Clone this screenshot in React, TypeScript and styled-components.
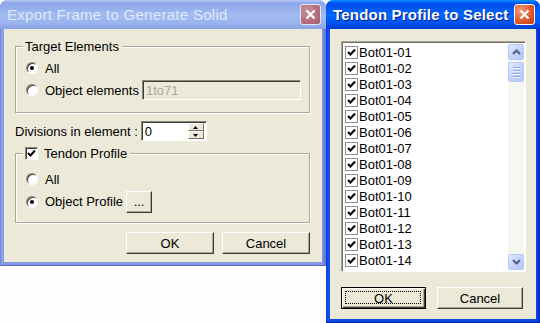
import styled, { createGlobalStyle } from 'styled-components';

const GlobalStyle = createGlobalStyle`
  html, body {
    margin: 0;
    padding: 0;
    background: #ffffff;
    font-family: "Liberation Sans", Arial, sans-serif;
    font-size: 12px;
    color: #000;
  }
`;

const Desktop = styled.div`
  width: 540px;
  height: 323px;
  display: flex;
  align-items: flex-start;
  overflow: hidden;
  background: #fefefe;
`;

const Window = styled.div<{ $active?: boolean; $w: number; $h: number }>`
  width: ${(p) => p.$w}px;
  height: ${(p) => p.$h}px;
  flex: none;
  box-sizing: border-box;
  display: flex;
  flex-direction: column;
  border-radius: 8px 8px 0 0;
  padding-bottom: 4px;
  background: ${(p) =>
    p.$active
      ? 'linear-gradient(to right, #0831d9 0, #1453f0 2px, #0a4be8 4px, #0a4be8 calc(100% - 4px), #0026c4 100%)'
      : 'linear-gradient(to right, #6f84db 0, #8ea4ea 2px, #8298e4 4px, #8298e4 calc(100% - 4px), #5f72cf 100%)'};
  box-shadow: ${(p) =>
    p.$active ? 'inset 0 -1px 0 #001ea0' : 'inset 0 -1px 0 #5a68c4'};
`;

const TitleBar = styled.div<{ $active?: boolean }>`
  height: 29px;
  flex: none;
  display: flex;
  align-items: center;
  justify-content: space-between;
  padding: 0 5px 0 7px;
  border-radius: 7px 7px 0 0;
  background: ${(p) =>
    p.$active
      ? 'linear-gradient(to bottom, #0997ff 0, #0053ee 3px, #0050ee 6px, #0066ff 14px, #0058f5 22px, #0041dc 27px, #003dd7 29px)'
      : 'linear-gradient(to bottom, #b8caf5 0, #8da6ea 3px, #94aeec 8px, #a4bcf1 15px, #9bb3ee 23px, #8aa1e4 29px)'};
`;

const TitleText = styled.span<{ $active?: boolean }>`
  font-weight: ${(p) => (p.$active ? 'bold' : 'normal')};
  font-size: 15px;
  letter-spacing: ${(p) => (p.$active ? '0.2px' : '0.3px')};
  color: ${(p) => (p.$active ? '#ffffff' : '#dfe8fa')};
  text-shadow: ${(p) => (p.$active ? '1px 1px 0 #0a1883' : 'none')};
  white-space: nowrap;
`;

const CloseButton = styled.div<{ $active?: boolean }>`
  width: 21px;
  height: 21px;
  box-sizing: border-box;
  border-radius: 3px;
  border: 1px solid ${(p) => (p.$active ? '#ffffff' : '#dfe6f8')};
  background: ${(p) =>
    p.$active
      ? 'radial-gradient(circle at 30% 30%, #f19b7b 0, #e25a2f 55%, #c23b12 100%)'
      : 'radial-gradient(circle at 30% 30%, #c7909c 0, #b26d7b 60%, #a05f70 100%)'};
  display: flex;
  align-items: center;
  justify-content: center;
`;

const Client = styled.div`
  flex: 1;
  margin: 0 4px;
  background: #ece9d8;
  display: flex;
  flex-direction: column;
`;

/* left dialog */

const LeftBody = styled(Client)`
  padding: 10px 12px 0 11px;
`;

const Group = styled.fieldset<{ $h: number; $top: number }>`
  margin: 0;
  height: ${(p) => p.$h}px;
  box-sizing: border-box;
  padding: ${(p) => p.$top}px 6px 0 7px;
  border: 1px solid #aca899;
  box-shadow: inset 1px 1px 0 #ffffff, 1px 1px 0 #ffffff;
`;

const Legend = styled.legend`
  padding: 0 3px 0 2px;
  height: 15px;
  line-height: 15px;
  font-size: 13px;
  background: #ece9d8;
  display: flex;
  align-items: center;
  gap: 6px;
`;

const OptionRow = styled.div<{ $h?: number }>`
  height: ${(p) => p.$h ?? 22}px;
  display: flex;
  align-items: center;
  gap: 3px;
  padding-left: 3px;
  font-size: 13px;
  white-space: nowrap;
`;

const Radio = styled.span<{ $on?: boolean }>`
  width: 12px;
  height: 12px;
  box-sizing: border-box;
  border-radius: 50%;
  border: 1px solid;
  border-color: #8a8878 #ffffff #ffffff #8a8878;
  background: #ffffff;
  box-shadow: inset 1px 1px 0 #3c3b35;
  margin-right: 4px;
  position: relative;
  flex: none;
  &::after {
    content: '';
    display: ${(p) => (p.$on ? 'block' : 'none')};
    position: absolute;
    left: 3px;
    top: 3px;
    width: 4px;
    height: 4px;
    border-radius: 50%;
    background: #000;
  }
`;

const Field = styled.div<{ $w: number; $disabled?: boolean }>`
  width: ${(p) => p.$w}px;
  height: 20px;
  box-sizing: border-box;
  flex-shrink: 1;
  border: 1px solid;
  border-color: #8a8878 #ffffff #ffffff #8a8878;
  box-shadow: inset 1px 1px 0 #3c3b35;
  background: ${(p) => (p.$disabled ? '#ece9d8' : '#ffffff')};
  color: ${(p) => (p.$disabled ? '#aca899' : '#000')};
  display: flex;
  align-items: center;
  padding-left: 3px;
  font-size: 13px;
`;

const DivisionsRow = styled.div`
  height: 22px;
  margin: 7px 0 4px;
  display: flex;
  align-items: center;
  font-size: 13px;
  gap: 3px;
  white-space: nowrap;
`;

const SpinBox = styled(Field)`
  justify-content: space-between;
  padding: 1px 2px 1px 3px;
`;

const SpinArrows = styled.div`
  width: 16px;
  height: 16px;
  display: flex;
  flex-direction: column;
`;

const SpinHalf = styled.div`
  flex: 1;
  background: #ece9d8;
  border: 1px solid;
  border-color: #ffffff #716f64 #716f64 #ffffff;
  display: flex;
  align-items: center;
  justify-content: center;
`;

const Button = styled.div<{ $w: number; $default?: boolean }>`
  width: ${(p) => p.$w}px;
  height: 22px;
  box-sizing: border-box;
  background: #ece9d8;
  border: 1px solid;
  border-color: ${(p) =>
    p.$default ? '#000000' : '#ffffff #3c3b35 #3c3b35 #ffffff'};
  box-shadow: ${(p) =>
    p.$default
      ? 'inset 1px 1px 0 #ffffff, inset -1px -1px 0 #3c3b35, inset -2px -2px 0 #aca899'
      : 'inset -1px -1px 0 #aca899'};
  display: flex;
  align-items: center;
  justify-content: center;
  font-size: 13px;
  flex: none;
  position: relative;
`;

const FocusRing = styled.span`
  position: absolute;
  inset: 3px 4px 4px 3px;
  border: 1px dotted #000;
`;

const ButtonRow = styled.div<{ $gap: number; $start?: boolean; $top: number }>`
  display: flex;
  justify-content: ${(p) => (p.$start ? 'flex-start' : 'flex-end')};
  gap: ${(p) => p.$gap}px;
  margin-top: ${(p) => p.$top}px;
`;

const Check = styled.span<{ $sunken?: boolean }>`
  width: 13px;
  height: 13px;
  box-sizing: border-box;
  flex: none;
  background: #ffffff;
  border: 1px solid;
  border-color: ${(p) =>
    p.$sunken ? '#8a8878 #ffffff #ffffff #8a8878' : '#8c8c8c'};
  box-shadow: ${(p) => (p.$sunken ? 'inset 1px 1px 0 #3c3b35' : 'none')};
  display: flex;
  align-items: center;
  justify-content: center;
`;

/* right dialog */

const RightBody = styled(Client)`
  padding: 12px 10px 0 11px;
`;

const ListBox = styled.div`
  height: 231px;
  box-sizing: border-box;
  border: 1px solid;
  border-color: #aca899 #ffffff #ffffff #aca899;
  box-shadow: inset 1px 1px 0 #716f64;
  background: #ffffff;
  display: flex;
  padding: 2px 1px 1px 2px;
`;

const Items = styled.div`
  flex: 1;
  overflow: hidden;
`;

const Item = styled.div`
  height: 16px;
  display: flex;
  align-items: center;
  gap: 1px;
  padding-left: 1px;
  font-size: 13px;
`;

const ScrollBar = styled.div`
  width: 16px;
  display: flex;
  flex-direction: column;
  background: #f7f7f2;
  gap: 2px;
`;

const ScrollBtn = styled.div`
  height: 16px;
  box-sizing: border-box;
  border: 1px solid #b5c8f5;
  border-radius: 2px;
  background: linear-gradient(135deg, #e1eafe 0, #c5d5fc 50%, #b4c8f6 100%);
  display: flex;
  align-items: center;
  justify-content: center;
`;

const Thumb = styled(ScrollBtn)`
  height: 20px;
  flex-direction: column;
  gap: 2px;
`;

const Grip = styled.span`
  width: 7px;
  height: 1px;
  background: #8da6e6;
  box-shadow: 0 1px 0 #eef3fe;
`;

const Track = styled.div`
  flex: 1;
`;

const Tick = () => (
  <svg width="9" height="9" viewBox="0 0 9 9">
    <path d="M1 4 L3.5 6.5 L8 1.5" fill="none" stroke="#000" strokeWidth="2" />
  </svg>
);

const CloseX = () => (
  <svg width="11" height="11" viewBox="0 0 11 11">
    <path d="M1.5 1.5 L9.5 9.5 M9.5 1.5 L1.5 9.5" stroke="#fff" strokeWidth="2.2" />
  </svg>
);

const Chevron = ({ up }: { up?: boolean }) => (
  <svg width="9" height="6" viewBox="0 0 9 6">
    <path
      d={up ? 'M1 5 L4.5 1.5 L8 5' : 'M1 1 L4.5 4.5 L8 1'}
      fill="none"
      stroke="#4d6185"
      strokeWidth="2"
    />
  </svg>
);

const SpinArrow = ({ up }: { up?: boolean }) => (
  <svg width="5" height="3" viewBox="0 0 5 3">
    <path d={up ? 'M2.5 0 L5 3 L0 3 Z' : 'M0 0 L5 0 L2.5 3 Z'} fill="#000" />
  </svg>
);

const profiles = Array.from(
  { length: 15 },
  (_, i) => `Bot01-${String(i + 1).padStart(2, '0')}`
);

export default function App() {
  return (
    <>
      <GlobalStyle />
      <Desktop>
        <Window $w={326} $h={266}>
          <TitleBar>
            <TitleText>Export Frame to Generate Solid</TitleText>
            <CloseButton>
              <CloseX />
            </CloseButton>
          </TitleBar>
          <LeftBody>
            <Group $h={74} $top={3}>
              <Legend>Target Elements</Legend>
              <OptionRow>
                <Radio $on />
                All
              </OptionRow>
              <OptionRow>
                <Radio />
                Object elements
                <Field $w={159} $disabled>
                  1to71
                </Field>
              </OptionRow>
            </Group>
            <DivisionsRow>
              Divisions in element :
              <SpinBox $w={66}>
                0
                <SpinArrows>
                  <SpinHalf>
                    <SpinArrow up />
                  </SpinHalf>
                  <SpinHalf>
                    <SpinArrow />
                  </SpinHalf>
                </SpinArrows>
              </SpinBox>
            </DivisionsRow>
            <Group $h={77} $top={7}>
              <Legend>
                <Check $sunken>
                  <Tick />
                </Check>
                Tendon Profile
              </Legend>
              <OptionRow $h={22}>
                <Radio />
                All
              </OptionRow>
              <OptionRow $h={23}>
                <Radio $on />
                Object Profile
                <Button $w={26}>...</Button>
              </OptionRow>
            </Group>
            <ButtonRow $gap={8} $top={9}>
              <Button $w={88}>OK</Button>
              <Button $w={88}>Cancel</Button>
            </ButtonRow>
          </LeftBody>
        </Window>
        <Window $active $w={214} $h={323}>
          <TitleBar $active>
            <TitleText $active>Tendon Profile to Select</TitleText>
            <CloseButton $active>
              <CloseX />
            </CloseButton>
          </TitleBar>
          <RightBody>
            <ListBox>
              <Items>
                {profiles.map((name) => (
                  <Item key={name}>
                    <Check>
                      <Tick />
                    </Check>
                    {name}
                  </Item>
                ))}
              </Items>
              <ScrollBar>
                <ScrollBtn>
                  <Chevron up />
                </ScrollBtn>
                <Thumb>
                  <Grip />
                  <Grip />
                  <Grip />
                  <Grip />
                </Thumb>
                <Track />
                <ScrollBtn>
                  <Chevron />
                </ScrollBtn>
              </ScrollBar>
            </ListBox>
            <ButtonRow $gap={11} $start $top={15}>
              <Button $w={85} $default>
                <FocusRing />
                OK
              </Button>
              <Button $w={86}>Cancel</Button>
            </ButtonRow>
          </RightBody>
        </Window>
      </Desktop>
    </>
  );
}
